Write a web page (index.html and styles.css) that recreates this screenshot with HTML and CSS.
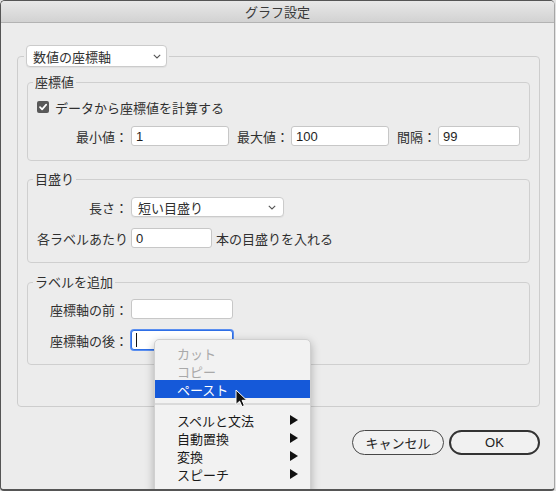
FILE: index.html
```html
<!DOCTYPE html>
<html lang="ja">
<head>
    <meta charset="UTF-8">
    <title>グラフ設定</title>
    <link rel="stylesheet" href="styles.css">
</head>
<body>
    <div class="window">
        <div class="titlebar">グラフ設定</div>

        <div class="content">
            <div class="outer">
                <div class="outer-legend">
                    <div class="popup axis-popup">
                        <span>数値の座標軸</span>
                        <svg class="chevron" width="8" height="5" viewBox="0 0 8 5"><path d="M0.8 0.8 L4 4 L7.2 0.8" fill="none" stroke="#555" stroke-width="1.1"/></svg>
                    </div>
                </div>

                <div class="group">
                    <div class="group-title">座標値</div>
                    <div class="check-row">
                        <span class="checkbox">
                            <svg width="12" height="12" viewBox="0 0 12 12"><path d="M3 6.2 L5.1 8.4 L9.2 3.6" fill="none" stroke="#fff" stroke-width="1.7" stroke-linecap="round" stroke-linejoin="round"/></svg>
                        </span>
                        データから座標値を計算する
                    </div>
                    <div class="row first-row">
                        <span class="label">最小値：</span>
                        <div class="field w98">1</div>
                        <span class="inline-label">最大値：</span>
                        <div class="field w98">100</div>
                        <span class="inline-label">間隔：</span>
                        <div class="field w82">99</div>
                    </div>
                </div>

                <div class="group">
                    <div class="group-title">目盛り</div>
                    <div class="row first-row">
                        <span class="label">長さ：</span>
                        <div class="popup length-popup">
                            <span>短い目盛り</span>
                            <svg class="chevron" width="8" height="5" viewBox="0 0 8 5"><path d="M0.8 0.8 L4 4 L7.2 0.8" fill="none" stroke="#555" stroke-width="1.1"/></svg>
                        </div>
                    </div>
                    <div class="row">
                        <span class="label">各ラベルあたり</span>
                        <div class="field w81">0</div>
                        <span class="after">本の目盛りを入れる</span>
                    </div>
                </div>

                <div class="group">
                    <div class="group-title">ラベルを追加</div>
                    <div class="row label-row">
                        <span class="label">座標軸の前：</span>
                        <div class="field w102"></div>
                    </div>
                    <div class="row">
                        <span class="label">座標軸の後：</span>
                        <div class="field w102 focused"><span class="caret"></span></div>
                    </div>
                </div>
            </div>

            <div class="buttons">
                <button class="btn cancel">キャンセル</button>
                <button class="btn ok">OK</button>
            </div>
        </div>

        <div class="menu">
            <div class="item disabled">カット</div>
            <div class="item disabled">コピー</div>
            <div class="item active">ペースト</div>
            <div class="separator"></div>
            <div class="item">スペルと文法<svg width="8" height="10" viewBox="0 0 8 10"><path d="M0 0 L8 5 L0 10 Z" fill="#111"/></svg></div>
            <div class="item">自動置換<svg width="8" height="10" viewBox="0 0 8 10"><path d="M0 0 L8 5 L0 10 Z" fill="#111"/></svg></div>
            <div class="item">変換<svg width="8" height="10" viewBox="0 0 8 10"><path d="M0 0 L8 5 L0 10 Z" fill="#111"/></svg></div>
            <div class="item">スピーチ<svg width="8" height="10" viewBox="0 0 8 10"><path d="M0 0 L8 5 L0 10 Z" fill="#111"/></svg></div>
        </div>

        <svg class="cursor" width="13" height="19" viewBox="0 0 13 19">
            <path d="M1 1 L1 15.5 L4.6 12.2 L7 17.6 L9.4 16.5 L7.1 11.3 L11.8 11.3 Z" fill="#111" stroke="#fff" stroke-width="1" stroke-linejoin="round"/>
        </svg>
    </div>
</body>
</html>
```

FILE: styles.css
```css
html, body { margin: 0; padding: 0; overflow: hidden; }
body { background: #e2e2e2; font-family: "Noto Sans CJK JP", sans-serif; font-size: 13px; color: #303030; width: 556px; height: 491px; }

.window { position: relative; width: 555px; height: 491px; box-sizing: border-box; background: #ececec; border: 1px solid #555; border-right-color: #a6a6a6; border-bottom-width: 2px; border-radius: 5px 5px 4px 4px; overflow: hidden; }
.titlebar { height: 21px; line-height: 21px; text-align: center; background: linear-gradient(#e8e8e8, #d2d2d2); border-bottom: 1px solid #b3b3b3; color: #3a3a3a; }

.content { padding: 33px 0 0 16px; }
.outer { width: 523px; box-sizing: border-box; border: 1px solid #cdcdcd; border-radius: 4px; padding: 0 9px 41px 9px; }
.outer-legend { display: flex; margin: -12px 0 0 -3px; padding: 0 2px; background: #ececec; width: fit-content; }

.popup { display: flex; align-items: center; justify-content: space-between; box-sizing: border-box; height: 22px; background: #fff; border: 1px solid #cbcbcb; border-radius: 4px; box-shadow: 0 1px 1px rgba(0,0,0,0.05); }
.axis-popup { width: 141px; padding: 0 5px 0 6px; }
.length-popup { width: 153px; height: 20px; padding: 0 7px 0 6px; }
.chevron { display: block; }

.group { border: 1px solid #cfcfcf; border-radius: 4px; margin-top: 15px; padding: 0 0 14px 0; }
.group + .group { margin-top: 18px; }
.group:last-child { margin-top: 19px; }
.group-title { margin: -9px 0 0 5px; padding: 0 2px; line-height: 16px; background: #ececec; width: fit-content; }

.check-row { display: flex; align-items: center; height: 18px; margin-top: 8px; padding-left: 9px; }
.checkbox { display: flex; width: 12px; height: 12px; background: #595959; border-radius: 2px; margin-right: 6px; }

.row { display: flex; align-items: center; height: 20px; margin-top: 10px; }
.first-row { margin-top: 10px; }
.label-row { margin-top: 9px; }
.row + .row { margin-top: 11px; }
.label { width: 100px; text-align: right; margin-right: 3px; white-space: nowrap; }
.inline-label { margin: 0 2px 0 8px; white-space: nowrap; }
.after { margin-left: 4px; }

.field { display: flex; align-items: center; box-sizing: border-box; height: 20px; background: #fff; border: 1px solid #c7c7c7; border-radius: 3px; padding: 0 4px; font-family: "Liberation Sans", "Noto Sans CJK JP", sans-serif; font-size: 13px; color: #1e1e1e; }
.w98 { width: 98px; }
.w82 { width: 82px; }
.w81 { width: 81px; }
.w102 { width: 102px; }
.focused { border: 1px solid #2f6fe6; box-shadow: 0 0 0 1px #5b8ff0; }
.caret { display: block; width: 1px; height: 14px; background: #111; }

.buttons { display: flex; justify-content: flex-end; gap: 5px; width: 523px; margin-top: 23px; }
.btn { height: 25px; border-radius: 13px; background: #f1f1f1; color: #222; font-family: "Noto Sans CJK JP", sans-serif; font-size: 13px; padding: 0; box-sizing: border-box; }
.cancel { width: 92px; border: 1px solid #474747; }
.ok { width: 91px; border: 2px solid #333; font-family: "Liberation Sans", sans-serif; }

.menu { position: absolute; left: 153px; top: 338px; width: 157px; height: 170px; box-sizing: border-box; padding-top: 4px; background: #f2f2f2; border: 1px solid #d0d0d0; border-radius: 5px; box-shadow: 0 3px 10px rgba(0,0,0,0.28); }
.item { display: flex; align-items: center; justify-content: space-between; height: 18px; padding: 0 12px 0 22px; color: #1a1a1a; }
.item.disabled { color: #a9a9a9; }
.item.active { background: #1559d9; color: #fff; }
.separator { height: 2px; background: #dadada; margin: 5px 0 6px; }

.cursor { position: absolute; left: 234px; top: 388px; }
```
